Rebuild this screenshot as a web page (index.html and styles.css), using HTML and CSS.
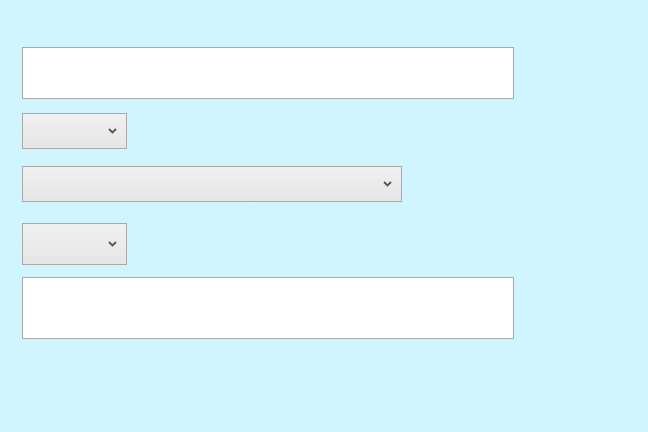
FILE: index.html
```html
<!DOCTYPE html>
<html>
<head>
<meta charset="utf-8">
<link rel="stylesheet" href="styles.css">
</head>
<body>
<div class="form">
  <div class="field text-lg"></div>
  <div class="select small h36 gap-a">
    <svg class="chev" width="9" height="6" viewBox="0 0 9 6"><path d="M1 1 L4.5 4.5 L8 1" fill="none" stroke="#555" stroke-width="1.8"/></svg>
  </div>
  <div class="select wide h36 gap-b">
    <svg class="chev" width="9" height="6" viewBox="0 0 9 6"><path d="M1 1 L4.5 4.5 L8 1" fill="none" stroke="#555" stroke-width="1.8"/></svg>
  </div>
  <div class="select small h42 gap-c">
    <svg class="chev" width="9" height="6" viewBox="0 0 9 6"><path d="M1 1 L4.5 4.5 L8 1" fill="none" stroke="#555" stroke-width="1.8"/></svg>
  </div>
  <div class="field text-xl gap-d"></div>
</div>
</body>
</html>
```
FILE: styles.css
```css
html, body {
  margin: 0;
  padding: 0;
  background: #d0f5ff;
  font-family: "Liberation Sans", Arial, sans-serif;
}
.form {
  display: flex;
  flex-direction: column;
  align-items: flex-start;
  padding: 47px 0 0 22px;
}
.field {
  box-sizing: border-box;
  width: 492px;
  background: #fff;
  border: 1px solid #a9a9a9;
}
.text-lg { height: 52px; }
.text-xl { height: 62px; }
.select {
  box-sizing: border-box;
  display: flex;
  align-items: center;
  justify-content: flex-end;
  padding-right: 9px;
  border: 1px solid #a9a9a9;
  background: linear-gradient(#f0f0f0, #e6e6e6);
}
.small { width: 105px; }
.wide { width: 380px; }
.h36 { height: 36px; }
.h42 { height: 42px; }
.chev { display: block; }
.gap-a { margin-top: 14px; }
.gap-b { margin-top: 17px; }
.gap-c { margin-top: 21px; }
.gap-d { margin-top: 12px; }
```
